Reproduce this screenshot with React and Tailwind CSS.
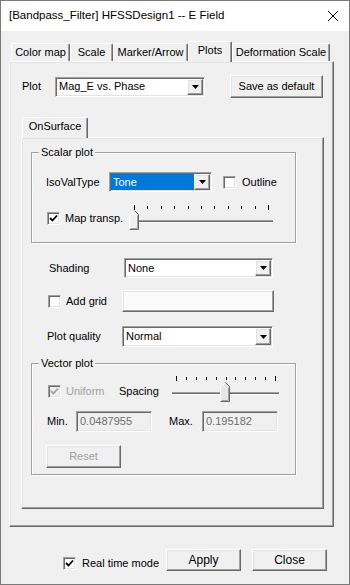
import React from "react";

// classic 3D borders
const raised =
  "border border-t-white border-l-white border-r-[#696969] border-b-[#696969] shadow-[inset_-1px_-1px_0_#a0a0a0,inset_1px_1px_0_#e3e3e3]";
const sunken =
  "border border-t-[#a0a0a0] border-l-[#a0a0a0] border-r-white border-b-white shadow-[inset_1px_1px_0_#696969,inset_-1px_-1px_0_#e3e3e3]";

function Triangle() {
  return (
    <svg width="7" height="4" viewBox="0 0 7 4">
      <polygon points="0,0 7,0 3.5,4" fill="#000" />
    </svg>
  );
}

function Combo({ className, value, selected }) {
  return (
    <div className={`flex h-[20px] bg-white p-[1px] ${sunken} ${className}`}>
      <div className="flex flex-1 items-center">
        {selected ? (
          <div className="flex h-full flex-1 items-center bg-[#0078d7] pl-[2px] text-white">{value}</div>
        ) : (
          <div className="pl-[2px]">{value}</div>
        )}
      </div>
      <div className={`flex w-[16px] items-center justify-center bg-[#f0f0f0] ${raised}`}>
        <Triangle />
      </div>
    </div>
  );
}

function Check({ checked, disabled }) {
  return (
    <div
      className={`flex h-[13px] w-[13px] shrink-0 items-center justify-center ${sunken} ${
        disabled ? "bg-[#f0f0f0]" : "bg-white"
      }`}
    >
      {checked && (
        <svg width="9" height="9" viewBox="0 0 9 9">
          <polyline
            points="1,4 3.5,6.5 8,1.5"
            fill="none"
            stroke={disabled ? "#a0a0a0" : "#000"}
            strokeWidth="1.8"
          />
        </svg>
      )}
    </div>
  );
}

function Button({ className, children, disabled }) {
  return (
    <div
      className={`flex items-center justify-center bg-[#f0f0f0] ${raised} ${className} ${
        disabled ? "text-[#a0a0a0]" : "text-black"
      }`}
    >
      {children}
    </div>
  );
}

function Slider({ width, height, x0, step, tickY, trackY, trackEnd, thumbX, thumbY, dotted }) {
  const ticks = Array.from({ length: 11 }, (_, i) => x0 + i * step);
  return (
    <svg width={width} height={height} viewBox={`0 0 ${width} ${height}`} className="shrink-0">
      <defs>
        <pattern id="dots" width="2" height="2" patternUnits="userSpaceOnUse">
          <rect width="2" height="2" fill="#f0f0f0" />
          <rect width="1" height="1" fill="#c8c8c8" />
        </pattern>
      </defs>
      {ticks.map((t, i) => (
        <rect
          key={i}
          x={Math.round(t)}
          y={i === 0 || i === 10 ? tickY - 1 : tickY}
          width="1"
          height={i === 0 || i === 10 ? 5 : 3}
          fill="#000"
        />
      ))}
      <rect x={x0 - 4} y={trackY} width={trackEnd - x0 + 4} height="1" fill="#a0a0a0" />
      <rect x={x0 - 4} y={trackY + 1} width={trackEnd - x0 + 4} height="1" fill="#696969" />
      <rect x={x0 - 4} y={trackY + 2} width={trackEnd - x0 + 4} height="1" fill="#ffffff" />
      <g transform={`translate(${thumbX + 0.5},${thumbY + 0.5})`}>
        <polygon points="0,5 5,0 9,4 9,19 0,19" fill={dotted ? "url(#dots)" : "#f0f0f0"} />
        <polyline points="0,19 0,5 5,0" fill="none" stroke="#ffffff" strokeWidth="1" />
        <polyline points="5,0 9,4 9,19 0,19" fill="none" stroke="#696969" strokeWidth="1" />
        <polyline points="8,5 8,18 1,18" fill="none" stroke="#a0a0a0" strokeWidth="1" />
      </g>
    </svg>
  );
}

function GroupBox({ label, className, children }) {
  return (
    <div
      className={`relative border border-[#a0a0a0] shadow-[inset_1px_1px_0_#ffffff,1px_1px_0_#ffffff] ${className}`}
    >
      <div className="absolute left-[7px] top-[-8px] bg-[#f0f0f0] px-[2px] leading-[14px]">{label}</div>
      {children}
    </div>
  );
}

function Tab({ className, label, active }) {
  return (
    <div
      className={`flex items-center justify-center whitespace-nowrap rounded-t-[2px] border-l border-t border-r border-l-white border-t-white border-r-[#696969] shadow-[inset_-1px_0_0_#a0a0a0] bg-[#f0f0f0] ${
        active ? "relative z-10 -mb-[1px] h-[21px] pb-[3px]" : "h-[18px]"
      } ${className}`}
    >
      {label}
    </div>
  );
}

export default function App() {
  return (
    <div className="flex h-[585px] w-[350px] flex-col border border-[#7a7a7a] bg-[#f0f0f0] font-['Liberation_Sans',Arial,sans-serif] text-[11px] text-black">
      {/* title bar */}
      <div className="flex h-[30px] shrink-0 items-center justify-between bg-white pl-[8px] pr-[10px] text-[11.5px]">
        <span>[Bandpass_Filter] HFSSDesign1 -- E Field</span>
        <svg width="12" height="12" viewBox="0 0 12 12">
          <path d="M1 1L11 11M11 1L1 11" stroke="#000" strokeWidth="1" />
        </svg>
      </div>

      {/* main tabs */}
      <div className="ml-[8px] mt-[10px] w-[325px]">
        <div className="flex h-[20px] items-end pl-[2px] text-[11px]">
          <Tab className="w-[59px]" label="Color map" />
          <Tab className="w-[43px]" label="Scale" />
          <Tab className="w-[75px]" label="Marker/Arrow" />
          <Tab className="w-[44px]" label="Plots" active />
          <Tab className="w-[98px]" label="Deformation Scale" />
        </div>
        <div className={`h-[466px] ${raised}`}>
          {/* plot row */}
          <div className="ml-[12px] mt-[13px] flex h-[23px] items-center">
            <div className="w-[33px]">Plot</div>
            <Combo className="w-[150px]" value="Mag_E vs. Phase" />
            <Button className="ml-[25px] h-[23px] w-[93px]">Save as default</Button>
          </div>

          {/* OnSurface */}
          <div className="ml-[11px] mt-[20px] w-[303px]">
            <div className="flex h-[19px] items-end pl-[1px]">
              <Tab className="w-[66px]" label="OnSurface" active />
            </div>
            <div className={`h-[372px] ${raised} pt-[14px]`}>
              <GroupBox label="Scalar plot" className="ml-[9px] h-[91px] w-[265px]">
                <div className="mt-[19px] flex h-[20px] items-center pl-[14px]">
                  <div className="w-[63px]">IsoValType</div>
                  <Combo className="w-[103px]" value="Tone" selected />
                  <div className="ml-[11px]">
                    <Check />
                  </div>
                  <div className="ml-[6px]">Outline</div>
                </div>
                <div className="mt-[11px] flex h-[30px] items-center pl-[15px]">
                  <div className="flex w-[80px] items-center">
                    <Check checked />
                    <div className="ml-[5px]">Map transp.</div>
                  </div>
                  <Slider
                    width={150}
                    height={30}
                    x0={7}
                    step={13.4}
                    tickY={3}
                    trackY={17}
                    trackEnd={146}
                    thumbX={2}
                    thumbY={7}
                  />
                </div>
              </GroupBox>

              <div className="ml-[27px] mt-[15px] flex h-[20px] items-center">
                <div className="w-[75px]">Shading</div>
                <Combo className="w-[149px]" value="None" />
              </div>

              <div className="ml-[26px] mt-[12px] flex h-[22px] items-center">
                <div className="flex w-[74px] items-center">
                  <Check />
                  <div className="ml-[5px]">Add grid</div>
                </div>
                <Button className="h-[22px] w-[152px] !bg-[#fbfbfb]" />
              </div>

              <div className="ml-[25px] mt-[14px] flex h-[21px] items-center">
                <div className="w-[75px]">Plot quality</div>
                <Combo className="!h-[21px] w-[151px]" value="Normal" />
              </div>

              <GroupBox label="Vector plot" className="ml-[9px] mt-[16px] h-[112px] w-[265px]">
                <div className="mt-[10px] flex h-[30px] items-center pl-[16px]">
                  <div className="flex w-[71px] items-center pt-[4px]">
                    <Check checked disabled />
                    <div className="ml-[5px] text-[#a0a0a0]">Uniform</div>
                  </div>
                  <div className="w-[47px] pt-[4px]">Spacing</div>
                  <Slider
                    width={118}
                    height={30}
                    x0={10}
                    step={9.9}
                    tickY={3}
                    trackY={18}
                    trackEnd={113}
                    thumbX={54}
                    thumbY={8}
                    dotted
                  />
                </div>
                <div className="mt-[7px] flex h-[21px] items-center pl-[15px]">
                  <div className="w-[29px]">Min.</div>
                  <div className={`flex h-[21px] w-[76px] items-center pl-[3px] text-[#6d6d6d] ${sunken}`}>
                    0.0487955
                  </div>
                  <div className="ml-[17px] w-[33px]">Max.</div>
                  <div className={`flex h-[21px] w-[76px] items-center pl-[3px] text-[#6d6d6d] ${sunken}`}>
                    0.195182
                  </div>
                </div>
                <Button className="ml-[14px] mt-[13px] h-[23px] w-[75px]" disabled>
                  Reset
                </Button>
              </GroupBox>
            </div>
          </div>
        </div>
      </div>

      {/* bottom bar */}
      <div className="ml-[62px] mt-[22px] flex h-[22px] items-center">
        <div className="flex w-[103px] items-center whitespace-nowrap pt-[7px] text-[11px]">
          <Check checked />
          <div className="ml-[6px]">Real time mode</div>
        </div>
        <Button className="h-[22px] w-[75px] text-[12px]">Apply</Button>
        <Button className="ml-[11px] h-[22px] w-[75px] text-[12px]">Close</Button>
      </div>
    </div>
  );
}
